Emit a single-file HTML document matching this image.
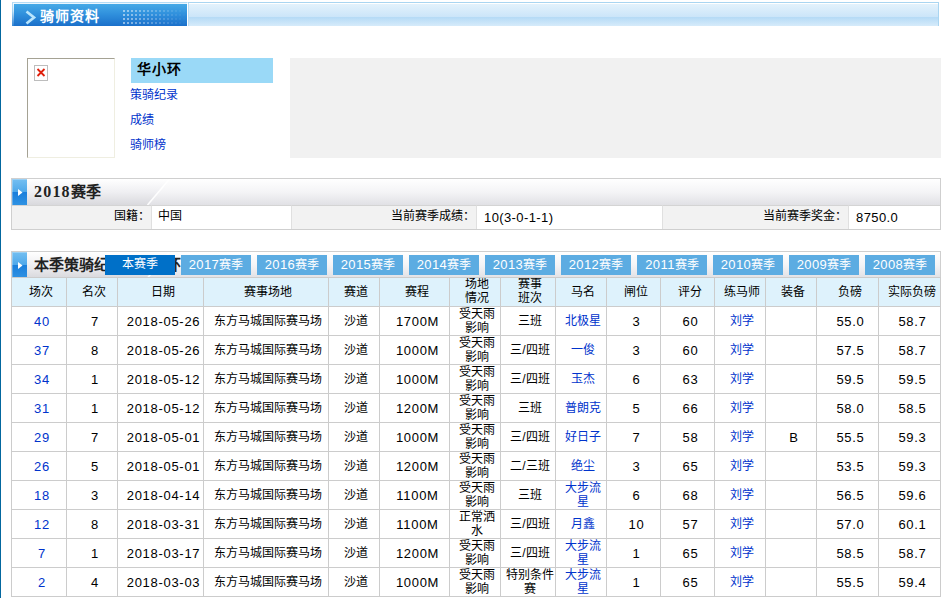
<!DOCTYPE html>
<html lang="zh-CN">
<head>
<meta charset="utf-8">
<title>骑师资料</title>
<style>
html,body{margin:0;padding:0;background:#fff;}
body{width:951px;height:598px;position:relative;overflow:hidden;font-family:"Liberation Sans",sans-serif;font-size:12px;color:#000;}
div,span,a{box-sizing:border-box;}
a{color:#0033cc;text-decoration:none;}
.abs{position:absolute;}
.n{font-size:13px;letter-spacing:0.4px;}
.v{position:relative;top:2px;left:1px;}
.m{font-size:13px;letter-spacing:0.7px;position:relative;top:1px;left:1px;}
#lline{left:0;top:0;width:1px;height:598px;background:#03679f;}
#hbar{left:12px;top:2px;width:927px;height:24px;border-top:1px solid #a9d5f1;border-right:1px solid #a9d5f1;
 background:linear-gradient(to bottom,#fff 0,#fff 1px,#e3f2fc 1px,#cbe5f9 14px,#b4daf6 14px,#d6ebfa 23px);}
#htab{left:12px;top:2px;width:176px;height:24px;border-left:0;border-top:1px solid #b5dcf5;border-right:1px solid #fff;
 background:linear-gradient(to bottom,#48ace8 0,#2f8fdc 50%,#1b70ca 100%);box-shadow:inset 0 1px 0 #eaf6fe;}
#hl1{left:12px;top:2px;width:1px;height:24px;background:linear-gradient(to bottom,#b5dcf5 0,#9fd0f0 40%,#3a8ad6 100%);}
#hl2{left:13px;top:3px;width:1px;height:23px;background:linear-gradient(to bottom,#f2faff 0,#cfe8f8 35%,#2a7fd2 100%);}
#htitle{left:40px;top:8px;font-size:14px;letter-spacing:1px;font-weight:bold;color:#fff;line-height:17px;white-space:nowrap;}
#photo{left:27px;top:58px;width:88px;height:100px;border:1px solid;border-color:#a5a294 #efeee1 #efeee1 #a5a294;background:#fff;}
#brk{left:34px;top:65px;width:14px;height:16px;border:1px solid #bdbdbd;background:#fff;}
#nm{left:131px;top:58px;width:142px;height:25px;background:#9ad9f7;font-size:14px;letter-spacing:1px;font-weight:bold;line-height:22px;padding-left:6px;white-space:nowrap;}
.lk{left:130px;height:25px;line-height:24px;white-space:nowrap;}
#gray{left:290px;top:58px;width:651px;height:100px;background:#f1f1f1;}
.sec{left:11px;width:930px;border:1px solid #cfcfcf;}
.sbar{left:0;top:0;width:928px;height:26px;background:linear-gradient(to bottom,#ffffff 0,#f4f4f6 50%,#e1e1e5 100%);}
.sleft{left:0;top:0;width:160px;height:26px;background:linear-gradient(to bottom,#ffffff 0,#efeff2 50%,#d9d9dd 100%);clip-path:polygon(0 0,157px 0,135px 26px,0 26px);}
.sico{left:0;top:0;width:15px;height:26px;background:linear-gradient(to bottom,#74bff1 0,#4ea8ea 49%,#1a7edb 50%,#2f92e3 100%);box-shadow:inset 1px 1px 0 rgba(255,255,255,.28);}
.stit{left:22px;top:3px;font-family:"Liberation Serif",serif;font-size:15px;font-weight:bold;line-height:20px;white-space:nowrap;color:#222;}
.stit .d{font-size:16px;letter-spacing:1.2px;}
.ic{background:#f2f2f2;}
.icell{top:26px;height:24px;line-height:20px;border-left:1px solid #e0e0e0;border-top:1px solid #d4d4d4;white-space:nowrap;}
.lab{background:#f2f2f2;text-align:right;padding-right:1px;}
.val{background:#fff;padding-left:6px;}
.tab{top:255px;width:70px;height:20px;background:#5cace2;color:#fff;text-align:center;line-height:19px;white-space:nowrap;}
.tab.on{background:#0070c8;}
#tbl{left:11px;top:277px;width:930px;height:320px;background:#ccc;}
.c{position:absolute;background:#fff;text-align:center;white-space:nowrap;padding-left:4px;overflow:hidden;}
.h{background:#def2fc;}
.l1{line-height:28px;}
.l1h{line-height:28px;}
.up{position:relative;top:-1px;}
.l2{line-height:14px;}
</style>
</head>
<body>
<div class="abs" id="lline"></div>
<div class="abs" id="hbar"></div>
<div class="abs" id="htab"></div>
<div class="abs" id="hl1"></div><div class="abs" id="hl2"></div>
<div class="abs" style="left:188px;top:3px;width:1px;height:23px;background:#b9dcf4"></div>
<svg class="abs" style="left:0;top:0" width="200" height="30" viewBox="0 0 200 30"><path d="M26.5 11.5 L34 17.5 L26.5 23.5" fill="none" stroke="#b8e5fd" stroke-width="2.7"/><rect x="123" y="10" width="2" height="2" fill="#fff" fill-opacity="0.50"/><rect x="123" y="14" width="2" height="2" fill="#fff" fill-opacity="0.50"/><rect x="123" y="18" width="2" height="2" fill="#fff" fill-opacity="0.50"/><rect x="123" y="22" width="2" height="2" fill="#fff" fill-opacity="0.50"/><rect x="127" y="10" width="2" height="2" fill="#fff" fill-opacity="0.47"/><rect x="127" y="14" width="2" height="2" fill="#fff" fill-opacity="0.47"/><rect x="127" y="18" width="2" height="2" fill="#fff" fill-opacity="0.47"/><rect x="127" y="22" width="2" height="2" fill="#fff" fill-opacity="0.47"/><rect x="131" y="10" width="2" height="2" fill="#fff" fill-opacity="0.44"/><rect x="131" y="14" width="2" height="2" fill="#fff" fill-opacity="0.44"/><rect x="131" y="18" width="2" height="2" fill="#fff" fill-opacity="0.44"/><rect x="131" y="22" width="2" height="2" fill="#fff" fill-opacity="0.44"/><rect x="135" y="10" width="2" height="2" fill="#fff" fill-opacity="0.40"/><rect x="135" y="14" width="2" height="2" fill="#fff" fill-opacity="0.40"/><rect x="135" y="18" width="2" height="2" fill="#fff" fill-opacity="0.40"/><rect x="135" y="22" width="2" height="2" fill="#fff" fill-opacity="0.40"/><rect x="139" y="10" width="2" height="2" fill="#fff" fill-opacity="0.37"/><rect x="139" y="14" width="2" height="2" fill="#fff" fill-opacity="0.37"/><rect x="139" y="18" width="2" height="2" fill="#fff" fill-opacity="0.37"/><rect x="139" y="22" width="2" height="2" fill="#fff" fill-opacity="0.37"/><rect x="143" y="10" width="2" height="2" fill="#fff" fill-opacity="0.34"/><rect x="143" y="14" width="2" height="2" fill="#fff" fill-opacity="0.34"/><rect x="143" y="18" width="2" height="2" fill="#fff" fill-opacity="0.34"/><rect x="143" y="22" width="2" height="2" fill="#fff" fill-opacity="0.34"/><rect x="147" y="10" width="2" height="2" fill="#fff" fill-opacity="0.31"/><rect x="147" y="14" width="2" height="2" fill="#fff" fill-opacity="0.31"/><rect x="147" y="18" width="2" height="2" fill="#fff" fill-opacity="0.31"/><rect x="147" y="22" width="2" height="2" fill="#fff" fill-opacity="0.31"/><rect x="151" y="10" width="2" height="2" fill="#fff" fill-opacity="0.27"/><rect x="151" y="14" width="2" height="2" fill="#fff" fill-opacity="0.27"/><rect x="151" y="18" width="2" height="2" fill="#fff" fill-opacity="0.27"/><rect x="151" y="22" width="2" height="2" fill="#fff" fill-opacity="0.27"/><rect x="155" y="10" width="2" height="2" fill="#fff" fill-opacity="0.24"/><rect x="155" y="14" width="2" height="2" fill="#fff" fill-opacity="0.24"/><rect x="155" y="18" width="2" height="2" fill="#fff" fill-opacity="0.24"/><rect x="155" y="22" width="2" height="2" fill="#fff" fill-opacity="0.24"/><rect x="159" y="10" width="2" height="2" fill="#fff" fill-opacity="0.21"/><rect x="159" y="14" width="2" height="2" fill="#fff" fill-opacity="0.21"/><rect x="159" y="18" width="2" height="2" fill="#fff" fill-opacity="0.21"/><rect x="159" y="22" width="2" height="2" fill="#fff" fill-opacity="0.21"/><rect x="163" y="10" width="2" height="2" fill="#fff" fill-opacity="0.18"/><rect x="163" y="14" width="2" height="2" fill="#fff" fill-opacity="0.18"/><rect x="163" y="18" width="2" height="2" fill="#fff" fill-opacity="0.18"/><rect x="163" y="22" width="2" height="2" fill="#fff" fill-opacity="0.18"/><rect x="167" y="10" width="2" height="2" fill="#fff" fill-opacity="0.15"/><rect x="167" y="14" width="2" height="2" fill="#fff" fill-opacity="0.15"/><rect x="167" y="18" width="2" height="2" fill="#fff" fill-opacity="0.15"/><rect x="167" y="22" width="2" height="2" fill="#fff" fill-opacity="0.15"/><rect x="171" y="10" width="2" height="2" fill="#fff" fill-opacity="0.11"/><rect x="171" y="14" width="2" height="2" fill="#fff" fill-opacity="0.11"/><rect x="171" y="18" width="2" height="2" fill="#fff" fill-opacity="0.11"/><rect x="171" y="22" width="2" height="2" fill="#fff" fill-opacity="0.11"/><rect x="175" y="10" width="2" height="2" fill="#fff" fill-opacity="0.08"/><rect x="175" y="14" width="2" height="2" fill="#fff" fill-opacity="0.08"/><rect x="175" y="18" width="2" height="2" fill="#fff" fill-opacity="0.08"/><rect x="175" y="22" width="2" height="2" fill="#fff" fill-opacity="0.08"/><rect x="179" y="10" width="2" height="2" fill="#fff" fill-opacity="0.05"/><rect x="179" y="14" width="2" height="2" fill="#fff" fill-opacity="0.05"/><rect x="179" y="18" width="2" height="2" fill="#fff" fill-opacity="0.05"/><rect x="179" y="22" width="2" height="2" fill="#fff" fill-opacity="0.05"/><rect x="183" y="10" width="2" height="2" fill="#fff" fill-opacity="0.02"/><rect x="183" y="14" width="2" height="2" fill="#fff" fill-opacity="0.02"/><rect x="183" y="18" width="2" height="2" fill="#fff" fill-opacity="0.02"/><rect x="183" y="22" width="2" height="2" fill="#fff" fill-opacity="0.02"/></svg>
<div class="abs" id="htitle">骑师资料</div>
<div class="abs" id="photo"></div>
<div class="abs" id="brk"><svg width="12" height="14" viewBox="0 0 12 14" style="display:block"><path d="M2.5 3 L9.5 10 M9.5 3 L2.5 10" stroke="#e0200c" stroke-width="1.8" fill="none"/></svg></div>
<div class="abs" id="nm">华小环</div>
<div class="abs lk" style="top:83px"><a>策骑纪录</a></div>
<div class="abs lk" style="top:108px"><a>成绩</a></div>
<div class="abs lk" style="top:133px"><a>骑师榜</a></div>
<div class="abs" id="gray"></div>
<div class="abs sec" style="top:178px;height:52px;background:#fff"><div class="abs sbar"><div class="abs sleft"></div><svg class="abs" style="left:0;top:0" width="170" height="26"><path d="M157.5 0 L135.5 26" stroke="#fff" stroke-opacity="0.9" stroke-width="1.6" fill="none"/></svg><div class="abs sico"><svg width="15" height="26" style="display:block"><path d="M6 10 L10.5 13.5 L6 17 Z" fill="#fff"/></svg></div><div class="abs stit"><span class="d">2018</span>赛季</div></div><div class="abs icell lab" style="left:0;width:139px;border-left:0">国籍：</div><div class="abs icell val" style="left:139px;width:140px">中国</div><div class="abs icell lab" style="left:279px;width:185px">当前赛季成绩：</div><div class="abs icell val" style="left:464px;width:186px"><span class="n v">10(3-0-1-1)</span></div><div class="abs icell lab" style="left:650px;width:186px">当前赛季奖金：</div><div class="abs icell val" style="left:836px;width:92px"><span class="n v">8750.0</span></div></div>
<div class="abs sec" style="top:251px;height:28px;border-bottom:0"><div class="abs sbar"><div class="abs sleft"></div><svg class="abs" style="left:0;top:0" width="170" height="26"><path d="M157.5 0 L135.5 26" stroke="#fff" stroke-opacity="0.9" stroke-width="1.6" fill="none"/></svg><div class="abs sico"><svg width="15" height="26" style="display:block"><path d="M6 10 L10.5 13.5 L6 17 Z" fill="#fff"/></svg></div><div class="abs stit">本季策骑纪录 - 华小环</div></div></div>
<div class="abs tab on" style="left:105px">本赛季</div>
<div class="abs tab" style="left:181px"><span class="n">2017</span>赛季</div>
<div class="abs tab" style="left:257px"><span class="n">2016</span>赛季</div>
<div class="abs tab" style="left:333px"><span class="n">2015</span>赛季</div>
<div class="abs tab" style="left:409px"><span class="n">2014</span>赛季</div>
<div class="abs tab" style="left:485px"><span class="n">2013</span>赛季</div>
<div class="abs tab" style="left:561px"><span class="n">2012</span>赛季</div>
<div class="abs tab" style="left:637px"><span class="n">2011</span>赛季</div>
<div class="abs tab" style="left:713px"><span class="n">2010</span>赛季</div>
<div class="abs tab" style="left:789px"><span class="n">2009</span>赛季</div>
<div class="abs tab" style="left:865px"><span class="n">2008</span>赛季</div>
<div class="abs" id="tbl">
<div class="c h l1h" style="left:1px;top:1px;width:54px;height:28px">场次</div><div class="c h l1h" style="left:56px;top:1px;width:50px;height:28px">名次</div><div class="c h l1h" style="left:107px;top:1px;width:85px;height:28px">日期</div><div class="c h l1h" style="left:193px;top:1px;width:124px;height:28px">赛事场地</div><div class="c h l1h" style="left:318px;top:1px;width:50px;height:28px">赛道</div><div class="c h l1h" style="left:369px;top:1px;width:69px;height:28px">赛程</div><div class="c h l2" style="left:439px;top:1px;width:50px;height:28px"><span class="up">场地<br>情况</span></div><div class="c h l2" style="left:490px;top:1px;width:54px;height:28px"><span class="up">赛事<br>班次</span></div><div class="c h l1h" style="left:545px;top:1px;width:50px;height:28px">马名</div><div class="c h l1h" style="left:596px;top:1px;width:53px;height:28px">闸位</div><div class="c h l1h" style="left:650px;top:1px;width:53px;height:28px">评分</div><div class="c h l1h" style="left:704px;top:1px;width:50px;height:28px">练马师</div><div class="c h l1h" style="left:755px;top:1px;width:50px;height:28px">装备</div><div class="c h l1h" style="left:806px;top:1px;width:61px;height:28px">负磅</div><div class="c h l1h" style="left:868px;top:1px;width:61px;height:28px">实际负磅</div>
<div class="c l1" style="left:1px;top:30px;width:54px;height:28px"><a class="m">40</a></div><div class="c l1" style="left:56px;top:30px;width:50px;height:28px"><span class="m">7</span></div><div class="c l1" style="left:107px;top:30px;width:85px;height:28px"><span class="m">2018-05-26</span></div><div class="c l1" style="left:193px;top:30px;width:124px;height:28px">东方马城国际赛马场</div><div class="c l1" style="left:318px;top:30px;width:50px;height:28px">沙道</div><div class="c l1" style="left:369px;top:30px;width:69px;height:28px"><span class="m">1700M</span></div><div class="c l2" style="left:439px;top:30px;width:50px;height:28px">受天雨<br>影响</div><div class="c l1" style="left:490px;top:30px;width:54px;height:28px">三班</div><div class="c l1" style="left:545px;top:30px;width:50px;height:28px"><a>北极星</a></div><div class="c l1" style="left:596px;top:30px;width:53px;height:28px"><span class="m">3</span></div><div class="c l1" style="left:650px;top:30px;width:53px;height:28px"><span class="m">60</span></div><div class="c l1" style="left:704px;top:30px;width:50px;height:28px"><a>刘学</a></div><div class="c l1" style="left:755px;top:30px;width:50px;height:28px"><span class="m"></span></div><div class="c l1" style="left:806px;top:30px;width:61px;height:28px"><span class="m">55.0</span></div><div class="c l1" style="left:868px;top:30px;width:61px;height:28px"><span class="m">58.7</span></div>
<div class="c l1" style="left:1px;top:59px;width:54px;height:28px"><a class="m">37</a></div><div class="c l1" style="left:56px;top:59px;width:50px;height:28px"><span class="m">8</span></div><div class="c l1" style="left:107px;top:59px;width:85px;height:28px"><span class="m">2018-05-26</span></div><div class="c l1" style="left:193px;top:59px;width:124px;height:28px">东方马城国际赛马场</div><div class="c l1" style="left:318px;top:59px;width:50px;height:28px">沙道</div><div class="c l1" style="left:369px;top:59px;width:69px;height:28px"><span class="m">1000M</span></div><div class="c l2" style="left:439px;top:59px;width:50px;height:28px">受天雨<br>影响</div><div class="c l1" style="left:490px;top:59px;width:54px;height:28px">三/四班</div><div class="c l1" style="left:545px;top:59px;width:50px;height:28px"><a>一俊</a></div><div class="c l1" style="left:596px;top:59px;width:53px;height:28px"><span class="m">3</span></div><div class="c l1" style="left:650px;top:59px;width:53px;height:28px"><span class="m">60</span></div><div class="c l1" style="left:704px;top:59px;width:50px;height:28px"><a>刘学</a></div><div class="c l1" style="left:755px;top:59px;width:50px;height:28px"><span class="m"></span></div><div class="c l1" style="left:806px;top:59px;width:61px;height:28px"><span class="m">57.5</span></div><div class="c l1" style="left:868px;top:59px;width:61px;height:28px"><span class="m">58.7</span></div>
<div class="c l1" style="left:1px;top:88px;width:54px;height:28px"><a class="m">34</a></div><div class="c l1" style="left:56px;top:88px;width:50px;height:28px"><span class="m">1</span></div><div class="c l1" style="left:107px;top:88px;width:85px;height:28px"><span class="m">2018-05-12</span></div><div class="c l1" style="left:193px;top:88px;width:124px;height:28px">东方马城国际赛马场</div><div class="c l1" style="left:318px;top:88px;width:50px;height:28px">沙道</div><div class="c l1" style="left:369px;top:88px;width:69px;height:28px"><span class="m">1000M</span></div><div class="c l2" style="left:439px;top:88px;width:50px;height:28px">受天雨<br>影响</div><div class="c l1" style="left:490px;top:88px;width:54px;height:28px">三/四班</div><div class="c l1" style="left:545px;top:88px;width:50px;height:28px"><a>玉杰</a></div><div class="c l1" style="left:596px;top:88px;width:53px;height:28px"><span class="m">6</span></div><div class="c l1" style="left:650px;top:88px;width:53px;height:28px"><span class="m">63</span></div><div class="c l1" style="left:704px;top:88px;width:50px;height:28px"><a>刘学</a></div><div class="c l1" style="left:755px;top:88px;width:50px;height:28px"><span class="m"></span></div><div class="c l1" style="left:806px;top:88px;width:61px;height:28px"><span class="m">59.5</span></div><div class="c l1" style="left:868px;top:88px;width:61px;height:28px"><span class="m">59.5</span></div>
<div class="c l1" style="left:1px;top:117px;width:54px;height:28px"><a class="m">31</a></div><div class="c l1" style="left:56px;top:117px;width:50px;height:28px"><span class="m">1</span></div><div class="c l1" style="left:107px;top:117px;width:85px;height:28px"><span class="m">2018-05-12</span></div><div class="c l1" style="left:193px;top:117px;width:124px;height:28px">东方马城国际赛马场</div><div class="c l1" style="left:318px;top:117px;width:50px;height:28px">沙道</div><div class="c l1" style="left:369px;top:117px;width:69px;height:28px"><span class="m">1200M</span></div><div class="c l2" style="left:439px;top:117px;width:50px;height:28px">受天雨<br>影响</div><div class="c l1" style="left:490px;top:117px;width:54px;height:28px">三班</div><div class="c l1" style="left:545px;top:117px;width:50px;height:28px"><a>普朗克</a></div><div class="c l1" style="left:596px;top:117px;width:53px;height:28px"><span class="m">5</span></div><div class="c l1" style="left:650px;top:117px;width:53px;height:28px"><span class="m">66</span></div><div class="c l1" style="left:704px;top:117px;width:50px;height:28px"><a>刘学</a></div><div class="c l1" style="left:755px;top:117px;width:50px;height:28px"><span class="m"></span></div><div class="c l1" style="left:806px;top:117px;width:61px;height:28px"><span class="m">58.0</span></div><div class="c l1" style="left:868px;top:117px;width:61px;height:28px"><span class="m">58.5</span></div>
<div class="c l1" style="left:1px;top:146px;width:54px;height:28px"><a class="m">29</a></div><div class="c l1" style="left:56px;top:146px;width:50px;height:28px"><span class="m">7</span></div><div class="c l1" style="left:107px;top:146px;width:85px;height:28px"><span class="m">2018-05-01</span></div><div class="c l1" style="left:193px;top:146px;width:124px;height:28px">东方马城国际赛马场</div><div class="c l1" style="left:318px;top:146px;width:50px;height:28px">沙道</div><div class="c l1" style="left:369px;top:146px;width:69px;height:28px"><span class="m">1000M</span></div><div class="c l2" style="left:439px;top:146px;width:50px;height:28px">受天雨<br>影响</div><div class="c l1" style="left:490px;top:146px;width:54px;height:28px">三/四班</div><div class="c l1" style="left:545px;top:146px;width:50px;height:28px"><a>好日子</a></div><div class="c l1" style="left:596px;top:146px;width:53px;height:28px"><span class="m">7</span></div><div class="c l1" style="left:650px;top:146px;width:53px;height:28px"><span class="m">58</span></div><div class="c l1" style="left:704px;top:146px;width:50px;height:28px"><a>刘学</a></div><div class="c l1" style="left:755px;top:146px;width:50px;height:28px"><span class="m">B</span></div><div class="c l1" style="left:806px;top:146px;width:61px;height:28px"><span class="m">55.5</span></div><div class="c l1" style="left:868px;top:146px;width:61px;height:28px"><span class="m">59.3</span></div>
<div class="c l1" style="left:1px;top:175px;width:54px;height:28px"><a class="m">26</a></div><div class="c l1" style="left:56px;top:175px;width:50px;height:28px"><span class="m">5</span></div><div class="c l1" style="left:107px;top:175px;width:85px;height:28px"><span class="m">2018-05-01</span></div><div class="c l1" style="left:193px;top:175px;width:124px;height:28px">东方马城国际赛马场</div><div class="c l1" style="left:318px;top:175px;width:50px;height:28px">沙道</div><div class="c l1" style="left:369px;top:175px;width:69px;height:28px"><span class="m">1200M</span></div><div class="c l2" style="left:439px;top:175px;width:50px;height:28px">受天雨<br>影响</div><div class="c l1" style="left:490px;top:175px;width:54px;height:28px">二/三班</div><div class="c l1" style="left:545px;top:175px;width:50px;height:28px"><a>绝尘</a></div><div class="c l1" style="left:596px;top:175px;width:53px;height:28px"><span class="m">3</span></div><div class="c l1" style="left:650px;top:175px;width:53px;height:28px"><span class="m">65</span></div><div class="c l1" style="left:704px;top:175px;width:50px;height:28px"><a>刘学</a></div><div class="c l1" style="left:755px;top:175px;width:50px;height:28px"><span class="m"></span></div><div class="c l1" style="left:806px;top:175px;width:61px;height:28px"><span class="m">53.5</span></div><div class="c l1" style="left:868px;top:175px;width:61px;height:28px"><span class="m">59.3</span></div>
<div class="c l1" style="left:1px;top:204px;width:54px;height:28px"><a class="m">18</a></div><div class="c l1" style="left:56px;top:204px;width:50px;height:28px"><span class="m">3</span></div><div class="c l1" style="left:107px;top:204px;width:85px;height:28px"><span class="m">2018-04-14</span></div><div class="c l1" style="left:193px;top:204px;width:124px;height:28px">东方马城国际赛马场</div><div class="c l1" style="left:318px;top:204px;width:50px;height:28px">沙道</div><div class="c l1" style="left:369px;top:204px;width:69px;height:28px"><span class="m">1100M</span></div><div class="c l2" style="left:439px;top:204px;width:50px;height:28px">受天雨<br>影响</div><div class="c l1" style="left:490px;top:204px;width:54px;height:28px">三班</div><div class="c l2" style="left:545px;top:204px;width:50px;height:28px"><a>大步流<br>星</a></div><div class="c l1" style="left:596px;top:204px;width:53px;height:28px"><span class="m">6</span></div><div class="c l1" style="left:650px;top:204px;width:53px;height:28px"><span class="m">68</span></div><div class="c l1" style="left:704px;top:204px;width:50px;height:28px"><a>刘学</a></div><div class="c l1" style="left:755px;top:204px;width:50px;height:28px"><span class="m"></span></div><div class="c l1" style="left:806px;top:204px;width:61px;height:28px"><span class="m">56.5</span></div><div class="c l1" style="left:868px;top:204px;width:61px;height:28px"><span class="m">59.6</span></div>
<div class="c l1" style="left:1px;top:233px;width:54px;height:28px"><a class="m">12</a></div><div class="c l1" style="left:56px;top:233px;width:50px;height:28px"><span class="m">8</span></div><div class="c l1" style="left:107px;top:233px;width:85px;height:28px"><span class="m">2018-03-31</span></div><div class="c l1" style="left:193px;top:233px;width:124px;height:28px">东方马城国际赛马场</div><div class="c l1" style="left:318px;top:233px;width:50px;height:28px">沙道</div><div class="c l1" style="left:369px;top:233px;width:69px;height:28px"><span class="m">1100M</span></div><div class="c l2" style="left:439px;top:233px;width:50px;height:28px">正常洒<br>水</div><div class="c l1" style="left:490px;top:233px;width:54px;height:28px">三/四班</div><div class="c l1" style="left:545px;top:233px;width:50px;height:28px"><a>月鑫</a></div><div class="c l1" style="left:596px;top:233px;width:53px;height:28px"><span class="m">10</span></div><div class="c l1" style="left:650px;top:233px;width:53px;height:28px"><span class="m">57</span></div><div class="c l1" style="left:704px;top:233px;width:50px;height:28px"><a>刘学</a></div><div class="c l1" style="left:755px;top:233px;width:50px;height:28px"><span class="m"></span></div><div class="c l1" style="left:806px;top:233px;width:61px;height:28px"><span class="m">57.0</span></div><div class="c l1" style="left:868px;top:233px;width:61px;height:28px"><span class="m">60.1</span></div>
<div class="c l1" style="left:1px;top:262px;width:54px;height:28px"><a class="m">7</a></div><div class="c l1" style="left:56px;top:262px;width:50px;height:28px"><span class="m">1</span></div><div class="c l1" style="left:107px;top:262px;width:85px;height:28px"><span class="m">2018-03-17</span></div><div class="c l1" style="left:193px;top:262px;width:124px;height:28px">东方马城国际赛马场</div><div class="c l1" style="left:318px;top:262px;width:50px;height:28px">沙道</div><div class="c l1" style="left:369px;top:262px;width:69px;height:28px"><span class="m">1200M</span></div><div class="c l2" style="left:439px;top:262px;width:50px;height:28px">受天雨<br>影响</div><div class="c l1" style="left:490px;top:262px;width:54px;height:28px">三/四班</div><div class="c l2" style="left:545px;top:262px;width:50px;height:28px"><a>大步流<br>星</a></div><div class="c l1" style="left:596px;top:262px;width:53px;height:28px"><span class="m">1</span></div><div class="c l1" style="left:650px;top:262px;width:53px;height:28px"><span class="m">65</span></div><div class="c l1" style="left:704px;top:262px;width:50px;height:28px"><a>刘学</a></div><div class="c l1" style="left:755px;top:262px;width:50px;height:28px"><span class="m"></span></div><div class="c l1" style="left:806px;top:262px;width:61px;height:28px"><span class="m">58.5</span></div><div class="c l1" style="left:868px;top:262px;width:61px;height:28px"><span class="m">58.7</span></div>
<div class="c l1" style="left:1px;top:291px;width:54px;height:28px"><a class="m">2</a></div><div class="c l1" style="left:56px;top:291px;width:50px;height:28px"><span class="m">4</span></div><div class="c l1" style="left:107px;top:291px;width:85px;height:28px"><span class="m">2018-03-03</span></div><div class="c l1" style="left:193px;top:291px;width:124px;height:28px">东方马城国际赛马场</div><div class="c l1" style="left:318px;top:291px;width:50px;height:28px">沙道</div><div class="c l1" style="left:369px;top:291px;width:69px;height:28px"><span class="m">1000M</span></div><div class="c l2" style="left:439px;top:291px;width:50px;height:28px">受天雨<br>影响</div><div class="c l2" style="left:490px;top:291px;width:54px;height:28px">特别条件<br>赛</div><div class="c l2" style="left:545px;top:291px;width:50px;height:28px"><a>大步流<br>星</a></div><div class="c l1" style="left:596px;top:291px;width:53px;height:28px"><span class="m">1</span></div><div class="c l1" style="left:650px;top:291px;width:53px;height:28px"><span class="m">65</span></div><div class="c l1" style="left:704px;top:291px;width:50px;height:28px"><a>刘学</a></div><div class="c l1" style="left:755px;top:291px;width:50px;height:28px"><span class="m"></span></div><div class="c l1" style="left:806px;top:291px;width:61px;height:28px"><span class="m">55.5</span></div><div class="c l1" style="left:868px;top:291px;width:61px;height:28px"><span class="m">59.4</span></div>
</div>
</body>
</html>
